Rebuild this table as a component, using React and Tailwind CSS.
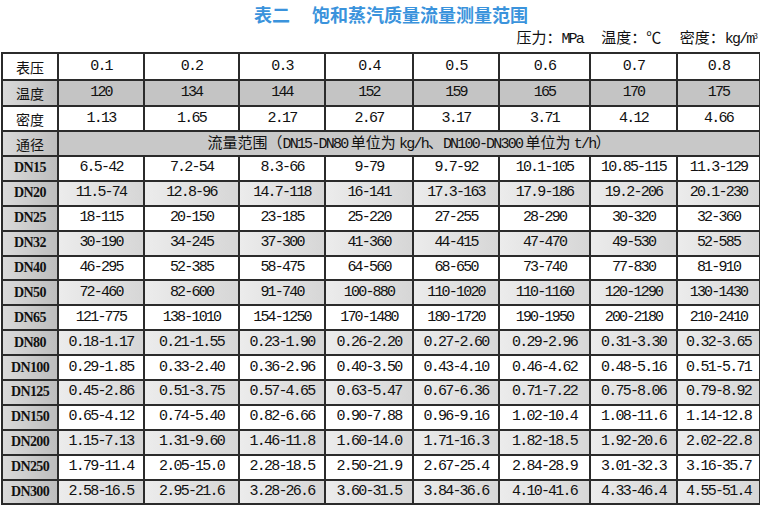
const cols = [56, 86, 95, 86, 88, 86, 91, 87, 83]

const pressure = ['0.1', '0.2', '0.3', '0.4', '0.5', '0.6', '0.7', '0.8']
const temp = ['120', '134', '144', '152', '159', '165', '170', '175']
const density = ['1.13', '1.65', '2.17', '2.67', '3.17', '3.71', '4.12', '4.66']

const rows = [
  ['DN15', '6.5-42', '7.2-54', '8.3-66', '9-79', '9.7-92', '10.1-105', '10.85-115', '11.3-129'],
  ['DN20', '11.5-74', '12.8-96', '14.7-118', '16-141', '17.3-163', '17.9-186', '19.2-206', '20.1-230'],
  ['DN25', '18-115', '20-150', '23-185', '25-220', '27-255', '28-290', '30-320', '32-360'],
  ['DN32', '30-190', '34-245', '37-300', '41-360', '44-415', '47-470', '49-530', '52-585'],
  ['DN40', '46-295', '52-385', '58-475', '64-560', '68-650', '73-740', '77-830', '81-910'],
  ['DN50', '72-460', '82-600', '91-740', '100-880', '110-1020', '110-1160', '120-1290', '130-1430'],
  ['DN65', '121-775', '138-1010', '154-1250', '170-1480', '180-1720', '190-1950', '200-2180', '210-2410'],
  ['DN80', '0.18-1.17', '0.21-1.55', '0.23-1.90', '0.26-2.20', '0.27-2.60', '0.29-2.96', '0.31-3.30', '0.32-3.65'],
  ['DN100', '0.29-1.85', '0.33-2.40', '0.36-2.96', '0.40-3.50', '0.43-4.10', '0.46-4.62', '0.48-5.16', '0.51-5.71'],
  ['DN125', '0.45-2.86', '0.51-3.75', '0.57-4.65', '0.63-5.47', '0.67-6.36', '0.71-7.22', '0.75-8.06', '0.79-8.92'],
  ['DN150', '0.65-4.12', '0.74-5.40', '0.82-6.66', '0.90-7.88', '0.96-9.16', '1.02-10.4', '1.08-11.6', '1.14-12.8'],
  ['DN200', '1.15-7.13', '1.31-9.60', '1.46-11.8', '1.60-14.0', '1.71-16.3', '1.82-18.5', '1.92-20.6', '2.02-22.8'],
  ['DN250', '1.79-11.4', '2.05-15.0', '2.28-18.5', '2.50-21.9', '2.67-25.4', '2.84-28.9', '3.01-32.3', '3.16-35.7'],
  ['DN300', '2.58-16.5', '2.95-21.6', '3.28-26.6', '3.60-31.5', '3.84-36.6', '4.10-41.6', '4.33-46.4', '4.55-51.4'],
]

const cjk = "font-['Noto_Sans_CJK_SC',sans-serif]"
const num = "font-['Liberation_Mono','Noto_Sans_CJK_SC',monospace] text-[15px] tracking-[-1.8px]"
const cell = 'border-2 border-[#2b2b2b] text-center p-0 text-[14px] leading-[18px] text-[#111]'
const shade = 'bg-gradient-to-r from-[#dadada] to-[#bdbdbd]'

function HeadRow({ name, values, gray, h }) {
  return (
    <tr className={h}>
      <td className={`${cell} ${cjk} ${gray ? shade : 'bg-white'}`}>{name}</td>
      {values.map((v, i) => (
        <td key={i} className={`${cell} ${num} ${gray ? 'bg-[#c4c4c4]' : 'bg-white'}`}>{v}</td>
      ))}
    </tr>
  )
}

export default function App() {
  return (
    <div className="w-[760px] h-[505px] bg-white overflow-hidden">
      <h1 className={`${cjk} text-center pl-[22px] pt-[3px] h-[28px] text-[18px] leading-[22px] font-bold text-[#3a93dc]`}>
        表二　 饱和蒸汽质量流量测量范围
      </h1>
      <div className={`${cjk} text-right pr-[2px] h-[24px] text-[15px] leading-[18px] text-[#111]`}>
        压力：<span className={num}>MPa</span>　 温度：℃　 密度：<span className={num}>kg/m</span><sup className="text-[8px]">3</sup>
      </div>
      <table className="ml-px border-collapse table-fixed w-[758px]">
        <colgroup>
          {cols.map((w, i) => (
            <col key={i} style={{ width: w }} />
          ))}
        </colgroup>
        <tbody>
          <HeadRow name="表压" values={pressure} h="h-[27px]" />
          <HeadRow name="温度" values={temp} gray h="h-[26px]" />
          <HeadRow name="密度" values={density} h="h-[25px]" />
          <tr className="h-[25px]">
            <td className={`${cell} ${cjk} ${shade}`}>通径</td>
            <td colSpan={8} className={`${cell} ${cjk} bg-[#c8c8c8] text-[15px]`}>
              流量范围（<span className={num}>DN15-DN80</span> 单位为 <span className={num}>kg/h</span>、<span className={num}>DN100-DN300</span> 单位为 <span className={num}>t/h</span>）
            </td>
          </tr>
          {rows.map((r, i) => (
            <tr key={r[0]} className="h-[24.9px]">
              <td className={`${cell} ${shade} font-['Liberation_Serif',serif] font-bold text-[14px] tracking-[-0.6px]`}>{r[0]}</td>
              {r.slice(1).map((v, j) => (
                <td
                  key={j}
                  className={`${cell} ${num} ${i % 2 ? 'bg-gradient-to-r from-[#ececec] to-[#d6d6d6]' : 'bg-white'}`}
                >
                  {v}
                </td>
              ))}
            </tr>
          ))}
        </tbody>
      </table>
    </div>
  )
}
